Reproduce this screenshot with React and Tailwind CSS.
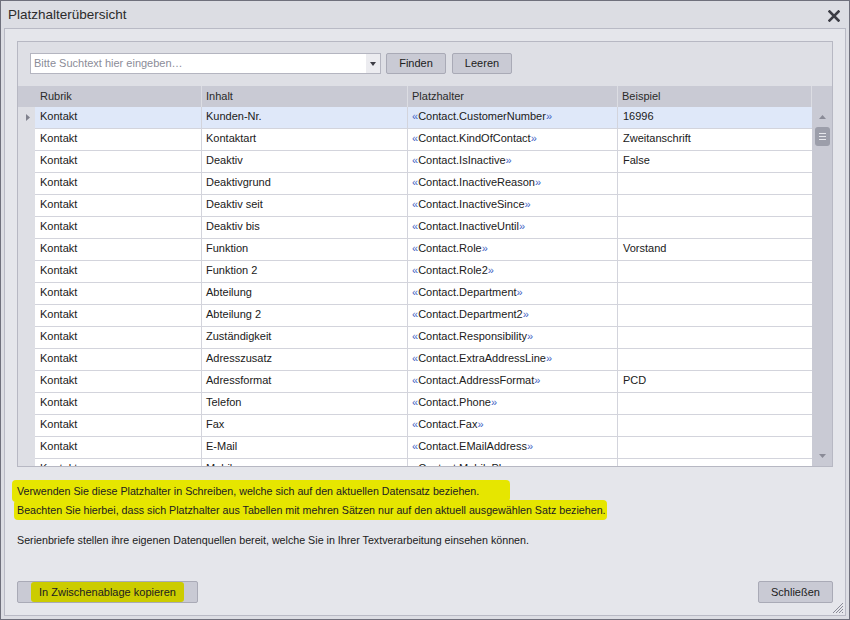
import { useState } from 'react'

// Zeilen der Platzhalter-Tabelle (Rubrik ist überall "Kontakt")
const ZEILEN = [
  ['Kunden-Nr.', 'CustomerNumber', '16996'],
  ['Kontaktart', 'KindOfContact', 'Zweitanschrift'],
  ['Deaktiv', 'IsInactive', 'False'],
  ['Deaktivgrund', 'InactiveReason', ''],
  ['Deaktiv seit', 'InactiveSince', ''],
  ['Deaktiv bis', 'InactiveUntil', ''],
  ['Funktion', 'Role', 'Vorstand'],
  ['Funktion 2', 'Role2', ''],
  ['Abteilung', 'Department', ''],
  ['Abteilung 2', 'Department2', ''],
  ['Zuständigkeit', 'Responsibility', ''],
  ['Adresszusatz', 'ExtraAddressLine', ''],
  ['Adressformat', 'AddressFormat', 'PCD'],
  ['Telefon', 'Phone', ''],
  ['Fax', 'Fax', ''],
  ['E-Mail', 'EMailAddress', ''],
  ['Mobil', 'MobilePhone', ''],
]

const FONT = { fontFamily: '"Liberation Sans", Arial, sans-serif' }

function Platzhalter({ name }) {
  return (
    <span>
      <span className="text-[#3f64c4]">«</span>Contact.{name}
      <span className="text-[#3f64c4]">»</span>
    </span>
  )
}

function Button({ children, className = '' }) {
  return (
    <button
      type="button"
      className={`rounded-[2px] border border-[#a9aab6] bg-[#c9cad4] text-[11px] text-[#202020] ${className}`}
    >
      {children}
    </button>
  )
}

export default function App() {
  const [suche, setSuche] = useState('')
  const [auswahl, setAuswahl] = useState(0)

  return (
    <div
      style={FONT}
      className="w-[850px] h-[620px] flex flex-col border border-[#6f707c] bg-[#dcdde3] text-[#202020] overflow-hidden"
    >
      {/* Titelleiste */}
      <div className="h-[27px] shrink-0 flex items-center justify-between pl-[7px] pr-[9px]">
        <span className="text-[13.5px] text-[#2b2b2b] pt-[2px]">Platzhalterübersicht</span>
        <svg width="12" height="12" viewBox="0 0 12 12" className="mt-[2px]">
          <path d="M1.5 1.5l9 9M10.5 1.5l-9 9" stroke="#3c3c44" strokeWidth="2.6" strokeLinecap="square" />
        </svg>
      </div>

      {/* Inhalt */}
      <div className="flex-1 mx-[3px] mb-[3px] border border-[#b9bac5] bg-[#e5e6eb] flex flex-col px-[12px] pt-[12px] relative">
        {/* Gruppe mit Suche und Tabelle */}
        <div className="h-[426px] shrink-0 border border-[#b7b8c3] bg-[#dedfe5] flex flex-col">
          <div className="h-[44px] shrink-0 flex items-start gap-[5px] pl-[12px] pt-[11px]">
            <div className="w-[351px] h-[21px] flex border border-[#b4b5c0] bg-white">
              <input
                value={suche}
                onChange={(e) => setSuche(e.target.value)}
                placeholder="Bitte Suchtext hier eingeben…"
                className="flex-1 min-w-0 px-[3px] text-[11px] outline-none placeholder:text-[#8b8c98]"
              />
              <div className="w-[14px] bg-[#ececf0] flex items-center justify-center">
                <svg width="6" height="4" viewBox="0 0 6 4">
                  <path d="M0 0h6L3 4z" fill="#3c3c44" />
                </svg>
              </div>
            </div>
            <Button className="w-[60px] h-[21px]">Finden</Button>
            <Button className="w-[60px] h-[21px] ml-[1px]">Leeren</Button>
          </div>

          {/* Tabelle */}
          <div className="flex-1 min-h-0 flex flex-col overflow-hidden">
            <div className="h-[21px] shrink-0 flex bg-[#c9cad4] text-[11px] text-[#2a2a2a]">
              <div className="w-[17px]" />
              <div className="w-[167px] border-r border-[#dcdde3] pl-[5px] flex items-center">Rubrik</div>
              <div className="w-[206px] border-r border-[#dcdde3] pl-[4px] flex items-center">Inhalt</div>
              <div className="w-[210px] border-r border-[#dcdde3] pl-[4px] flex items-center">Platzhalter</div>
              <div className="w-[194px] border-r border-[#dcdde3] pl-[4px] flex items-center">Beispiel</div>
              <div className="flex-1" />
            </div>
            <div className="flex-1 min-h-0 flex">
              <div className="flex-1 min-w-0 overflow-hidden">
                {ZEILEN.map(([inhalt, name, beispiel], i) => (
                  <div
                    key={name}
                    onClick={() => setAuswahl(i)}
                    className="h-[22px] flex text-[11px]"
                  >
                    <div className="w-[17px] bg-[#dedfe5] flex items-center justify-center pb-[2px]">
                      {auswahl === i && (
                        <svg width="4" height="7" viewBox="0 0 4 7" className="ml-[2px]">
                          <path d="M0 0l4 3.5L0 7z" fill="#80818d" />
                        </svg>
                      )}
                    </div>
                    <div
                      className={`flex-1 flex border-b border-[#d3d4dc] ${
                        auswahl === i ? 'bg-[#dfe8f9]' : 'bg-white'
                      }`}
                    >
                      <div className="w-[167px] border-r border-[#d3d4dc] pl-[5px] pb-[3px] flex items-center">Kontakt</div>
                      <div className="w-[206px] border-r border-[#d3d4dc] pl-[4px] pb-[3px] flex items-center">{inhalt}</div>
                      <div className="w-[210px] border-r border-[#d3d4dc] pl-[4px] pb-[3px] flex items-center">
                        <Platzhalter name={name} />
                      </div>
                      <div className="flex-1 pl-[5px] pb-[3px] flex items-center">{beispiel}</div>
                    </div>
                  </div>
                ))}
              </div>
              {/* Scrollbalken */}
              <div className="w-[20px] bg-[#c9cad4] flex flex-col items-center pt-[8px] pb-[8px]">
                <svg width="7" height="4" viewBox="0 0 7 4">
                  <path d="M0 4h7L3.5 0z" fill="#8a8b97" />
                </svg>
                <div className="mt-[8px] w-[15px] h-[19px] rounded-[3px] bg-[#9c9eaa] flex flex-col items-center justify-center gap-[2px]">
                  <div className="w-[7px] h-[1px] bg-[#e6e7ec]" />
                  <div className="w-[7px] h-[1px] bg-[#e6e7ec]" />
                  <div className="w-[7px] h-[1px] bg-[#e6e7ec]" />
                </div>
                <div className="flex-1" />
                <svg width="7" height="4" viewBox="0 0 7 4">
                  <path d="M0 0h7L3.5 4z" fill="#8a8b97" />
                </svg>
              </div>
            </div>
          </div>
        </div>

        {/* Hinweise */}
        <div className="mt-[13px] text-[10.7px] text-[#202020] whitespace-nowrap">
          <div className="-ml-[5px] w-[498px] h-[22px] pl-[5px] bg-[#e6e600] rounded-[4px] flex items-center">
            Verwenden Sie diese Platzhalter in Schreiben, welche sich auf den aktuellen Datensatz beziehen.
          </div>
          <div className="-ml-[3px] w-[593px] h-[20px] pl-[3px] bg-[#e6e600] rounded-[4px] flex items-center -mt-[2px]">
            Beachten Sie hierbei, dass sich Platzhalter aus Tabellen mit mehren Sätzen nur auf den aktuell ausgewählen Satz beziehen.
          </div>
          <div className="mt-[10px] h-[20px] flex items-center">
            Serienbriefe stellen ihre eigenen Datenquellen bereit, welche Sie in Ihrer Textverarbeitung einsehen können.
          </div>
        </div>

        {/* Schaltflächen */}
        <div className="mt-auto mb-[12px] flex justify-between">
          <Button className="w-[181px] h-[22px] flex items-center justify-center">
            <span className="bg-[#cccc00] px-[8px] h-[20px] leading-[20px] rounded-[3px]">In Zwischenablage kopieren</span>
          </Button>
          <Button className="w-[75px] h-[22px]">Schließen</Button>
        </div>

        {/* Größenänderungsgriff */}
        <svg width="11" height="11" viewBox="0 0 11 11" className="absolute right-[1px] bottom-[1px]">
          <path d="M10 3L3 10M10 6L6 10M10 9L9 10M10 0L0 10" stroke="#8a8b97" strokeWidth="1" />
        </svg>
      </div>
    </div>
  )
}
